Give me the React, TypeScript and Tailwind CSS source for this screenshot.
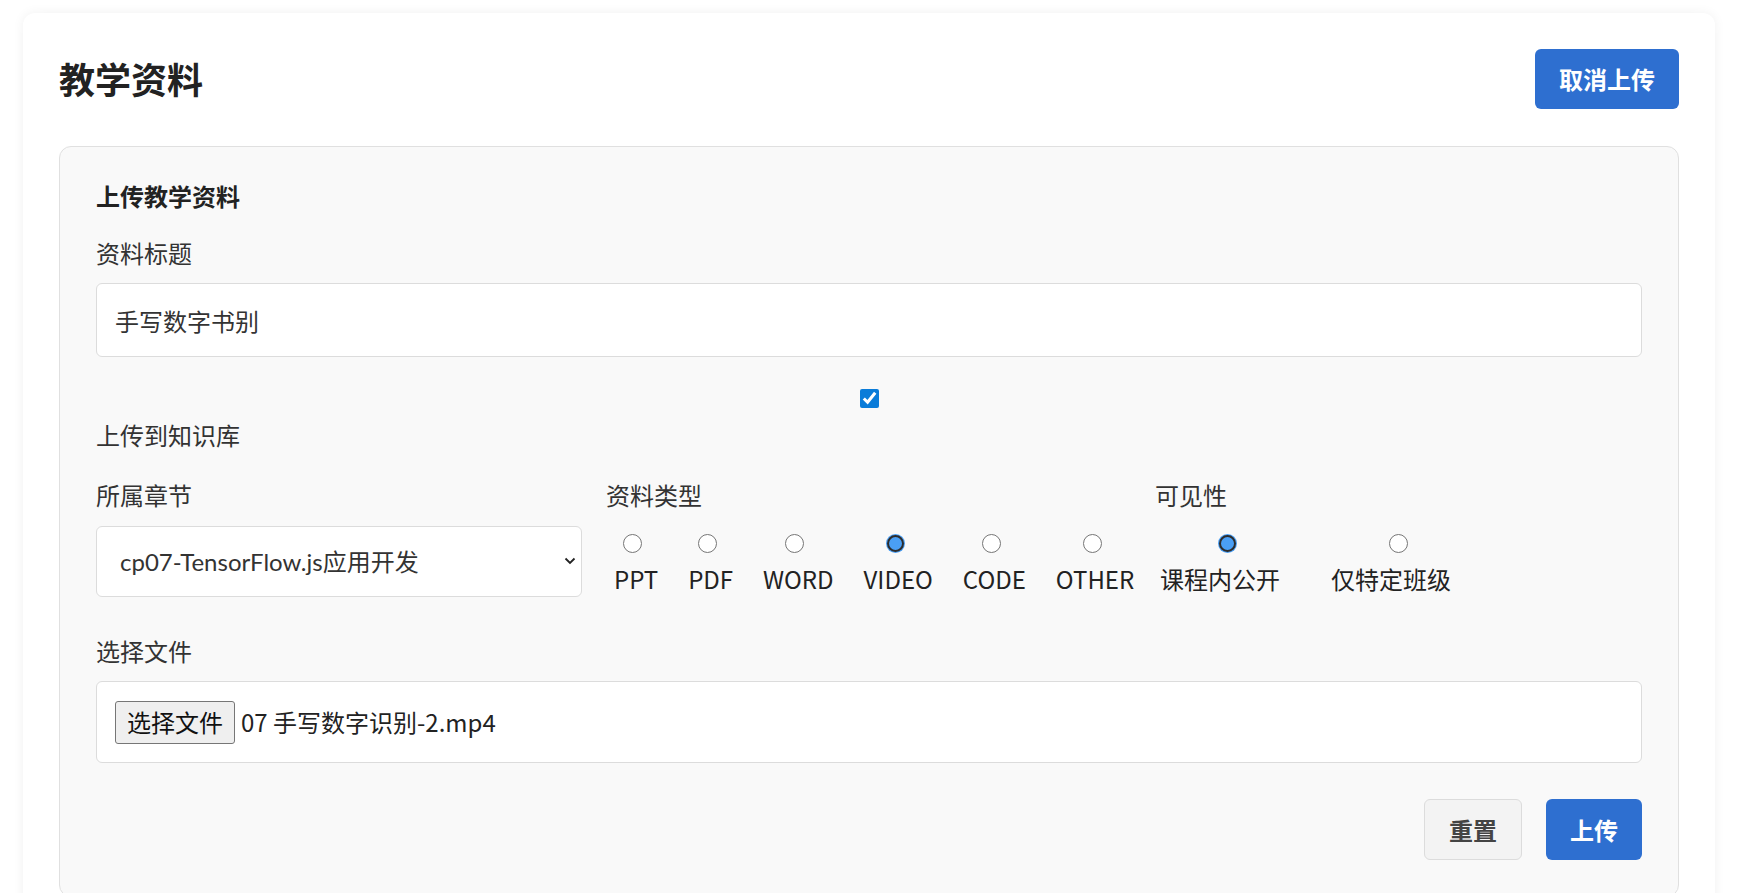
import { useState } from "react";

const typeOptions = [
  { value: "PPT", shift: "translate-x-[-4px]" },
  { value: "PDF", shift: "translate-x-[-3px]" },
  { value: "WORD", shift: "translate-x-[-4px]" },
  { value: "VIDEO", shift: "translate-x-[-3px]" },
  { value: "CODE", shift: "translate-x-[-3px]" },
  { value: "OTHER", shift: "translate-x-[-3px]" },
];

const visibilityOptions = [
  { value: "course", label: "课程内公开" },
  { value: "class", label: "仅特定班级" },
];

function Radio({ checked }: { checked: boolean }) {
  if (checked) {
    return (
      <span className="block w-[19px] h-[19px] rounded-full bg-[#4a9ff5] p-[1px]">
        <span className="block w-full h-full rounded-full border-[2.5px] border-[#2d2d2d] bg-[#4a9ff5]" />
      </span>
    );
  }
  return <span className="block w-[19px] h-[19px] rounded-full border-[1.5px] border-[#767676] bg-white" />;
}

export default function App() {
  const [title, setTitle] = useState("手写数字书别");
  const [toKb, setToKb] = useState(true);
  const [type, setType] = useState("VIDEO");
  const [visibility, setVisibility] = useState("course");

  return (
    <div
      className="min-h-screen bg-white pt-[13px] pl-[23px] text-[#333]"
      style={{ fontFamily: '"Noto Sans CJK SC", "Noto Sans", sans-serif' }}
    >
      <div className="w-[1692px] rounded-[12px] bg-white p-[36px] shadow-[0_0_12px_rgba(0,0,0,0.06)]">
        <header className="flex h-[60px] items-center justify-between mb-[37px]">
          <h1 className="text-[36px] font-bold text-[#222] -mt-[2px]">教学资料</h1>
          <button className="h-[60px] w-[144px] rounded-[6px] bg-[#2e6fd0] text-[24px] font-bold text-white">
            取消上传
          </button>
        </header>

        <div className="rounded-[12px] border border-[#e0e0e0] bg-[#f9f9f9] p-[36px]">
          <h3 className="text-[24px] leading-[26px] font-bold text-[#222] mb-[26px]">上传教学资料</h3>

          <label className="block text-[24px] leading-[36px] mb-[12px]">资料标题</label>
          <input
            value={title}
            onChange={e => setTitle(e.target.value)}
            className="block w-full h-[74px] rounded-[6px] border border-[#dcdcdc] bg-white px-[18px] text-[24px] text-[#333] outline-none"
          />

          <div className="mt-[32px] flex h-[19px] justify-center">
            <input
              type="checkbox"
              checked={toKb}
              onChange={e => setToKb(e.target.checked)}
              className="m-0 h-[19px] w-[19px] accent-[#0a7cd9]"
            />
          </div>
          <div className="mt-[9px] text-[24px] leading-[36px]">上传到知识库</div>

          <div className="mt-[24px] flex gap-[24px]">
            <div className="w-[486px]">
              <div className="text-[24px] leading-[36px]">所属章节</div>
              <div className="relative mt-[13px]">
                <select
                  className="block h-[71px] w-full appearance-none rounded-[6px] border border-[#dcdcdc] bg-white pl-[23px] text-[24px] text-[#333] outline-none"
                  style={{ fontFamily: 'Lato, "Noto Sans CJK SC", sans-serif' }}
                >
                  <option>cp07-TensorFlow.js应用开发</option>
                </select>
                <svg
                  className="pointer-events-none absolute right-[6px] top-[31px]"
                  width="12"
                  height="8"
                  viewBox="0 0 12 8"
                  fill="none"
                >
                  <path d="M1.5 1.5 6 6 10.5 1.5" stroke="#222" strokeWidth="1.8" />
                </svg>
              </div>
            </div>

            <div className="w-[525px]">
              <div className="text-[24px] leading-[36px]">资料类型</div>
              <div className="mt-[13px] flex gap-[30px] pl-[8px]">
                {typeOptions.map(opt => (
                  <label
                    key={opt.value}
                    onClick={() => setType(opt.value)}
                    className="flex cursor-pointer flex-col items-center"
                  >
                    <span className={"mt-[8px] " + opt.shift}>
                      <Radio checked={type === opt.value} />
                    </span>
                    <span className="mt-[8px] text-[24px] leading-[36px] text-[#222]">{opt.value}</span>
                  </label>
                ))}
              </div>
            </div>

            <div className="flex-1">
              <div className="text-[24px] leading-[36px]">可见性</div>
              <div className="mt-[13px] flex gap-[51px] pl-[5px]">
                {visibilityOptions.map(opt => (
                  <label
                    key={opt.value}
                    onClick={() => setVisibility(opt.value)}
                    className="flex cursor-pointer flex-col items-center"
                  >
                    <span className="mt-[8px] translate-x-[7px]">
                      <Radio checked={visibility === opt.value} />
                    </span>
                    <span className="mt-[8px] text-[24px] leading-[36px] text-[#222]">{opt.label}</span>
                  </label>
                ))}
              </div>
            </div>
          </div>

          <label className="mt-[36px] block text-[24px] leading-[36px] mb-[12px]">选择文件</label>
          <div className="flex h-[82px] items-center rounded-[6px] border border-[#dcdcdc] bg-white px-[18px]">
            <button className="h-[43px] w-[120px] rounded-[3px] border border-[#767676] bg-[#efefef] text-[24px] text-[#111]">
              选择文件
            </button>
            <span className="ml-[6px] text-[24px] text-[#222]">07 手写数字识别-2.mp4</span>
          </div>

          <div className="mt-[36px] flex justify-end gap-[24px]">
            <button className="h-[61px] rounded-[6px] border border-[#dcdcdc] bg-[#f3f3f3] px-[24px] text-[24px] font-bold text-[#444]">
              重置
            </button>
            <button className="h-[61px] rounded-[6px] bg-[#2e6fd0] px-[24px] text-[24px] font-bold text-white">
              上传
            </button>
          </div>
        </div>
      </div>
    </div>
  );
}
